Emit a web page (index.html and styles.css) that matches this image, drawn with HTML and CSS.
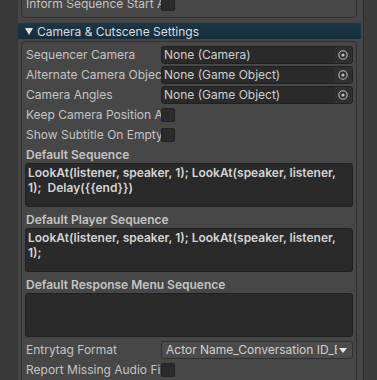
FILE: index.html
```html
<!DOCTYPE html>
<html lang="en">
<head>
    <meta charset="UTF-8">
    <meta name="viewport" content="width=device-width, initial-scale=1.0">
    <title>Dialogue System Inspector</title>
    <link rel="stylesheet" href="styles.css">
</head>
<body>
    <div class="inspector">
        <div class="gutter"></div>

        <div class="panel">
            <div class="group group-prev">
                <div class="row">
                    <span class="label">Inform Sequence Start And End Messages</span>
                    <span class="checkbox"></span>
                </div>
            </div>

            <div class="foldout">
                <svg class="fold-arrow" width="8" height="7" viewBox="0 0 8 7"><path d="M0 0H8L4 7Z" fill="#e0e0e0"/></svg>
                <span>Camera &amp; Cutscene Settings</span>
            </div>

            <div class="group">
                <div class="row">
                    <span class="label">Sequencer Camera</span>
                    <div class="object-field">
                        <span class="value">None (Camera)</span>
                        <span class="picker">
                            <svg width="10" height="10" viewBox="0 0 10 10"><circle cx="5" cy="5" r="4.2" fill="none" stroke="#bdbdbd" stroke-width="1.1"/><circle cx="5" cy="5" r="1.6" fill="#bdbdbd"/></svg>
                        </span>
                    </div>
                </div>
                <div class="row">
                    <span class="label">Alternate Camera Object</span>
                    <div class="object-field">
                        <span class="value">None (Game Object)</span>
                        <span class="picker">
                            <svg width="10" height="10" viewBox="0 0 10 10"><circle cx="5" cy="5" r="4.2" fill="none" stroke="#bdbdbd" stroke-width="1.1"/><circle cx="5" cy="5" r="1.6" fill="#bdbdbd"/></svg>
                        </span>
                    </div>
                </div>
                <div class="row">
                    <span class="label">Camera Angles</span>
                    <div class="object-field">
                        <span class="value">None (Game Object)</span>
                        <span class="picker">
                            <svg width="10" height="10" viewBox="0 0 10 10"><circle cx="5" cy="5" r="4.2" fill="none" stroke="#bdbdbd" stroke-width="1.1"/><circle cx="5" cy="5" r="1.6" fill="#bdbdbd"/></svg>
                        </span>
                    </div>
                </div>
                <div class="row">
                    <span class="label">Keep Camera Position At End</span>
                    <span class="checkbox"></span>
                </div>
                <div class="row">
                    <span class="label">Show Subtitle On Empty Sequence</span>
                    <span class="checkbox"></span>
                </div>

                <div class="text-label">Default Sequence</div>
                <div class="text-area">LookAt(listener, speaker, 1); LookAt(speaker, listener, 1);&nbsp; Delay({{end}})</div>

                <div class="text-label">Default Player Sequence</div>
                <div class="text-area">LookAt(listener, speaker, 1); LookAt(speaker, listener, 1);</div>

                <div class="text-label">Default Response Menu Sequence</div>
                <div class="text-area"></div>

                <div class="row">
                    <span class="label">Entrytag Format</span>
                    <div class="popup">
                        <span class="value">Actor Name_Conversation ID_Entry ID</span>
                        <svg class="popup-arrow" width="8" height="5" viewBox="0 0 8 5"><path d="M0 0H8L4 5Z" fill="#e4e4e4"/></svg>
                    </div>
                </div>
                <div class="row">
                    <span class="label">Report Missing Audio Files</span>
                    <span class="checkbox"></span>
                </div>
            </div>
        </div>

        <div class="scrollbar"></div>
    </div>
</body>
</html>
```

FILE: styles.css
```css
body {
    margin: 0;
    padding: 0;
    background-color: #3a3a3a;
    font-family: Inter, "Noto Sans", sans-serif;
    font-size: 12px;
    color: #c4c4c4;
    overflow: hidden;
}

.inspector {
    display: flex;
    width: 377px;
    height: 380px;
    overflow: hidden;
}

.gutter {
    width: 18px;
    background-color: #383838;
}

.panel {
    width: 345px;
    background-color: #464646;
}

.scrollbar {
    flex: 1;
    background-color: #3b3b3b;
    border-left: 1px solid #2c2c2c;
}

.group {
    margin: 0 6px 0 3px;
    padding: 3px 3px 3px 3px;
    border: 1px solid #303030;
    border-radius: 4px;
    background-color: #474747;
}

.group-prev {
    margin-top: -10px;
}

.foldout {
    display: flex;
    align-items: center;
    height: 16px;
    margin: 5px 2px 2px 0;
    padding-left: 7px;
    background: linear-gradient(#1d3747, #152d3b);
    color: #dcdcdc;
}

.fold-arrow {
    margin-right: 4px;
}

.row {
    display: grid;
    grid-template-columns: 136px minmax(0, 1fr);
    align-items: center;
    height: 20px;
}

.label {
    padding-left: 1px;
    line-height: 20px;
    white-space: nowrap;
    overflow: hidden;
}

.checkbox {
    width: 14px;
    height: 14px;
    box-sizing: border-box;
    background-color: #2b2b2b;
    border: 1px solid #222222;
    border-radius: 2px;
}

.object-field {
    display: flex;
    min-width: 0;
    height: 18px;
    box-sizing: border-box;
    background-color: #2a2a2a;
    border: 1px solid #212121;
    border-radius: 3px;
    overflow: hidden;
}

.object-field .value {
    flex: 1;
    min-width: 0;
    padding-left: 2px;
    line-height: 16px;
    white-space: nowrap;
    overflow: hidden;
    color: #cfcfcf;
}

.picker {
    display: flex;
    align-items: center;
    justify-content: center;
    width: 18px;
    background-color: #303030;
}

.text-label {
    height: 18px;
    padding: 2px 0 0 1px;
    box-sizing: border-box;
    line-height: 16px;
    font-weight: 600;
    white-space: nowrap;
    overflow: hidden;
}

.text-area {
    height: 44px;
    box-sizing: border-box;
    margin-bottom: 3px;
    padding: 1px 2px;
    background-color: #2a2a2a;
    border: 1px solid #202020;
    border-radius: 3px;
    font-weight: 600;
    line-height: 15px;
    color: #d4d4d4;
    overflow: hidden;
}

.popup {
    display: flex;
    align-items: center;
    min-width: 0;
    height: 18px;
    box-sizing: border-box;
    padding: 0 5px 0 4px;
    background-color: #4c4c4c;
    border: 1px solid #2f2f2f;
    border-radius: 3px;
}

.popup .value {
    flex: 1;
    min-width: 0;
    white-space: nowrap;
    overflow: hidden;
    line-height: 16px;
    color: #d0d0d0;
}

.popup-arrow {
    flex-shrink: 0;
    margin-left: 2px;
}
```
